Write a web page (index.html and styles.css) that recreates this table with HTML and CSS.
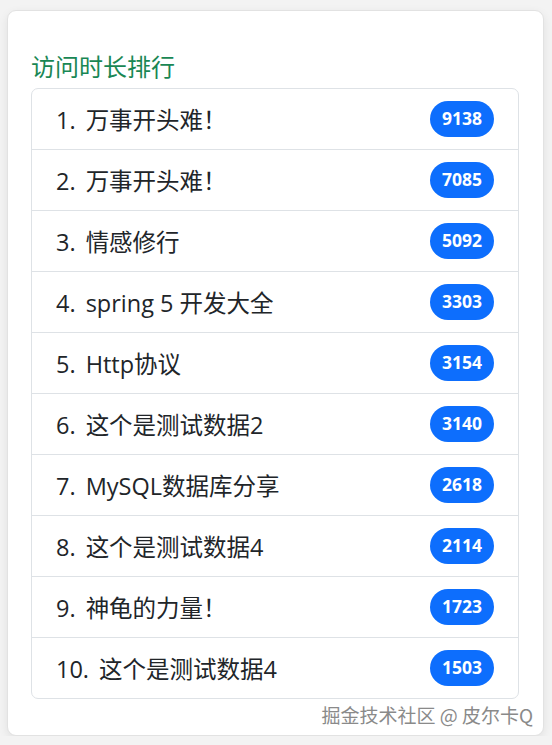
FILE: index.html
```html
<!DOCTYPE html>
<html lang="zh-CN">
<head>
<meta charset="utf-8">
<title>访问时长排行</title>
<link rel="stylesheet" href="styles.css">
</head>
<body>
<div class="card">
  <h5 class="title">访问时长排行</h5>
  <ul class="list">
    <li class="item"><span class="name"><span class="num">1.</span>万事开头难！</span><span class="badge">9138</span></li>
    <li class="item"><span class="name"><span class="num">2.</span>万事开头难！</span><span class="badge">7085</span></li>
    <li class="item"><span class="name"><span class="num">3.</span>情感修行</span><span class="badge">5092</span></li>
    <li class="item"><span class="name"><span class="num">4.</span>spring 5 开发大全</span><span class="badge">3303</span></li>
    <li class="item"><span class="name"><span class="num">5.</span>Http协议</span><span class="badge">3154</span></li>
    <li class="item"><span class="name"><span class="num">6.</span>这个是测试数据2</span><span class="badge">3140</span></li>
    <li class="item"><span class="name"><span class="num">7.</span>MySQL数据库分享</span><span class="badge">2618</span></li>
    <li class="item"><span class="name"><span class="num">8.</span>这个是测试数据4</span><span class="badge">2114</span></li>
    <li class="item"><span class="name"><span class="num">9.</span>神龟的力量！</span><span class="badge">1723</span></li>
    <li class="item"><span class="name"><span class="num">10.</span>这个是测试数据4</span><span class="badge">1503</span></li>
  </ul>
  <div class="watermark">掘金技术社区 @ 皮尔卡Q</div>
</div>
</body>
</html>
```

FILE: styles.css
```css
html, body {
  margin: 0;
  padding: 0;
  background: #f3f3f3;
}
body {
  padding: 10px 8px 0 7px;
  font-family: "Open Sans", "Noto Sans CJK SC", sans-serif;
  color: #212529;
}
.card {
  position: relative;
  background: #fff;
  border: 1px solid #e2e2e2;
  border-radius: 9px;
  box-shadow: 0 3px 10px rgba(0, 0, 0, 0.08);
  padding: 40px 24px 36px 23px;
  height: 726px;
  box-sizing: border-box;
}
.title {
  margin: 0 0 8px 0;
  font-size: 24px;
  font-weight: 400;
  line-height: 29px;
  color: #198754;
  font-family: "Noto Sans CJK SC", sans-serif;
}
.list {
  list-style: none;
  margin: 0;
  padding: 0;
  border: 1px solid #dee2e6;
  border-radius: 7px;
}
.item {
  display: flex;
  align-items: center;
  justify-content: space-between;
  height: 60px;
  padding: 0 24px 0 24px;
  border-bottom: 1px solid #dee2e6;
  font-size: 23.5px;
}
.item:last-child {
  border-bottom: none;
}
.name {
  white-space: nowrap;
}
.num {
  margin-right: 10px;
}
.badge {
  display: inline-block;
  background: #0d6efd;
  color: #fff;
  font-weight: 700;
  font-size: 17.5px;
  height: 36px;
  line-height: 35px;
  padding: 0 12px 0 12px;
  border-radius: 18px;
  font-family: "Open Sans", sans-serif;
}
.watermark {
  position: absolute;
  right: 10px;
  top: 690px;
  font-size: 19px;
  color: #8a8a8a;
  font-family: "Noto Sans CJK SC", sans-serif;
  text-shadow: 0 0 2px #fff, 1px 1px 1px #fff;
  white-space: nowrap;
}
```
